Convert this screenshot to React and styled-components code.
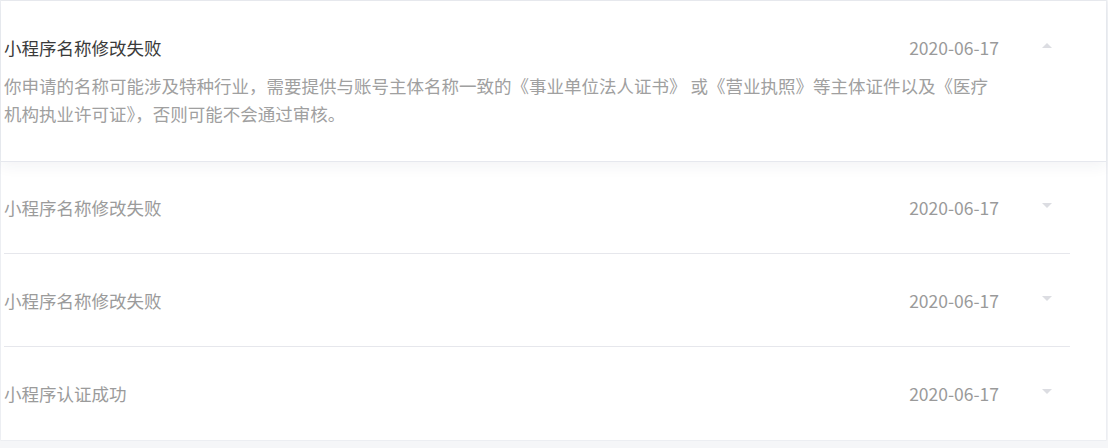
import React, { useState } from 'react'
import styled, { createGlobalStyle } from 'styled-components'

const GlobalStyle = createGlobalStyle`
  html, body {
    margin: 0;
    padding: 0;
    background: #f5f6f8;
    font-family: "Noto Sans CJK SC", "Noto Sans", "Liberation Sans", sans-serif;
  }
`

const notices = [
  {
    id: 1,
    title: '小程序名称修改失败',
    date: '2020-06-17',
    body: '你申请的名称可能涉及特种行业，需要提供与账号主体名称一致的《事业单位法人证书》 或《营业执照》等主体证件以及《医疗机构执业许可证》，否则可能不会通过审核。'
  },
  { id: 2, title: '小程序名称修改失败', date: '2020-06-17', body: '' },
  { id: 3, title: '小程序名称修改失败', date: '2020-06-17', body: '' },
  { id: 4, title: '小程序认证成功', date: '2020-06-17', body: '' }
]

function App() {
  const [open, setOpen] = useState(1)
  return (
    <>
      <GlobalStyle />
      <Card>
        {notices.map((n, i) => {
          const isOpen = open === n.id
          const last = i === notices.length - 1
          const nextOpen = notices[i + 1] && notices[i + 1].id === open
          return (
            <Item key={n.id} $open={isOpen}>
              <Inner $open={isOpen} $divider={!isOpen && !last && !nextOpen}>
                <Header onClick={() => setOpen(isOpen ? null : n.id)}>
                  <Title $open={isOpen}>{n.title}</Title>
                  <DateText>{n.date}</DateText>
                  <Caret $up={isOpen} />
                </Header>
                {isOpen && n.body && <Body>{n.body}</Body>}
              </Inner>
            </Item>
          )
        })}
      </Card>
    </>
  )
}

const Card = styled.div`
  width: 1105px;
  background: #fff;
  border: 1px solid #eceef2;
  border-top-color: #e9ebef;
  border-radius: 0 0 4px 4px;
  box-shadow: 0 1px 2px rgba(30, 40, 70, 0.05);
  display: flex;
  flex-direction: column;
`

const Item = styled.div`
  position: relative;
  background: #fff;
  z-index: ${p => (p.$open ? 1 : 0)};
  box-shadow: ${p =>
    p.$open ? '0 1px 0 #e6e8ee, 0 5px 14px rgba(40, 50, 90, 0.06)' : 'none'};
`

const Inner = styled.div`
  width: 1066px;
  margin-left: 3px;
  box-sizing: border-box;
  padding-top: 29px;
  padding-bottom: ${p => (p.$open ? '32px' : '27px')};
  border-bottom: 1px solid ${p => (p.$divider ? '#e6e7ec' : 'transparent')};
`

const Header = styled.div`
  display: flex;
  align-items: center;
  height: 36px;
  cursor: pointer;
`

const Title = styled.div`
  flex: 1;
  font-size: 17.5px;
  line-height: 36px;
  color: ${p => (p.$open ? '#3a3a3a' : '#9b9b9b')};
  white-space: nowrap;
`

const DateText = styled.div`
  font-size: 17.5px;
  line-height: 36px;
  color: #9a9a9a;
`

const Caret = styled.span`
  width: 0;
  height: 0;
  margin-left: 43px;
  margin-right: 18px;
  margin-bottom: 6px;
  border-left: 5px solid transparent;
  border-right: 5px solid transparent;
  ${p =>
    p.$up
      ? 'border-bottom: 5px solid #dcdde2;'
      : 'border-top: 5px solid #dcdde2;'}
`

const Body = styled.div`
  width: 1000px;
  margin-top: 6px;
  font-size: 17.5px;
  line-height: 28px;
  color: #a0a0a0;
`

export default App
